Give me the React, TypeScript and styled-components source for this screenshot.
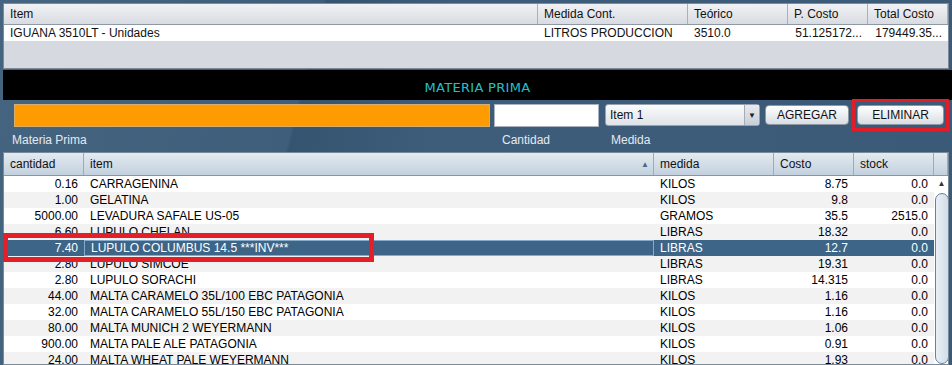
import styled, { createGlobalStyle } from 'styled-components'

const GlobalStyle = createGlobalStyle`
  body {
    margin: 0;
    background: #3b5a78;
    font-family: "Liberation Sans", Arial, sans-serif;
    font-size: 12px;
  }
`

const Frame = styled.div`
  position: relative;
  width: 952px;
  height: 365px;
  overflow: hidden;
  box-sizing: border-box;
  padding: 3px 3px 0 3px;
  display: flex;
  flex-direction: column;
  background: linear-gradient(104deg, #45647f 0, #3f5e7b 31%, #35546f 31.3%, #3d5d7b 45%, #3b5a78 100%);
`

const TopTable = styled.div`
  height: 66px;
  flex: none;
  box-sizing: border-box;
  border: 1px solid #7d8a99;
  background: #d6d9e0;
`

const TopRow = styled.div<{ $head?: boolean }>`
  display: grid;
  grid-template-columns: 534px 150px 100px 80px 1fr;
  height: ${p => (p.$head ? '20px' : '16px')};
  line-height: ${p => (p.$head ? '20px' : '16px')};
  background: ${p => (p.$head ? 'linear-gradient(#f1f2f5, #d8dbe1)' : '#fff')};
  border-bottom: ${p => (p.$head ? '1px solid #8e99a6' : 'none')};
`

const TopCell = styled.div<{ $head?: boolean; $right?: boolean }>`
  padding: 0 6px;
  color: #111;
  white-space: nowrap;
  overflow: hidden;
  text-align: ${p => (p.$right ? 'right' : 'left')};
  border-right: ${p => (p.$head ? '1px solid #aab1bb' : 'none')};
`

const TitleBar = styled.div`
  height: 30px;
  flex: none;
  margin-top: 1px;
  margin-right: -3px;
  background: #000;
  display: flex;
  align-items: center;
  justify-content: center;
  padding-top: 5px;
  box-sizing: border-box;
  color: #23c0c9;
  font-family: "DejaVu Sans", sans-serif;
  font-size: 13px;
  letter-spacing: 0.3px;
`

const Controls = styled.div`
  height: 30px;
  flex: none;
  display: flex;
  align-items: center;
  padding-left: 11px;
`

const Field = styled.div<{ $w: number; $bg: string }>`
  width: ${p => p.$w}px;
  height: 23px;
  box-sizing: border-box;
  background: ${p => p.$bg};
  border: 1px solid ${p => (p.$bg === '#fff' ? '#a9b4c0' : '#d9ad6a')};
  margin-right: 4px;
`

const Combo = styled.div`
  width: 155px;
  height: 22px;
  box-sizing: border-box;
  margin-left: 2px;
  border: 1px solid #98a3af;
  border-radius: 3px;
  background: linear-gradient(#fafbfc, #dfe2e7);
  display: flex;
  align-items: center;
  justify-content: space-between;
  padding-left: 4px;
  color: #111;
`

const ComboArrow = styled.div`
  width: 15px;
  height: 100%;
  box-sizing: border-box;
  border-left: 1px solid #a3adb8;
  background: linear-gradient(#e8ebef, #c9ced6);
  display: flex;
  align-items: center;
  justify-content: center;
  font-size: 8px;
  color: #222;
`

const Button = styled.div<{ $w: number }>`
  width: ${p => p.$w}px;
  height: 20px;
  box-sizing: border-box;
  border: 1px solid #8d97a3;
  border-radius: 4px;
  background: linear-gradient(#ffffff, #d9dde3);
  display: flex;
  align-items: center;
  justify-content: center;
  color: #111;
`

const AddButton = styled(Button)`
  margin-left: 5px;
`

const RedFrame = styled.div`
  margin-left: 3px;
  margin-top: -1px;
  padding: 3px 2px;
  border: 3px solid #e11d27;
`

const Labels = styled.div`
  height: 20px;
  flex: none;
  margin-bottom: 2px;
  display: grid;
  grid-template-columns: 490px 109px 1fr;
  padding-left: 9px;
  align-items: center;
  color: #e4eaf1;
`

const Grid = styled.div`
  flex: 1;
  min-height: 0;
  border: 1px solid #7b8a99;
  background: #fff;
  display: flex;
  flex-direction: column;
  overflow: hidden;
`

const cols = '80px 570px 120px 80px 80px'

const GridHead = styled.div`
  display: grid;
  grid-template-columns: ${cols} 1fr;
  height: 22px;
  flex: none;
  border-bottom: 1px solid #8697a8;
  background: linear-gradient(#e4eaf0, #c3d1de);
`

const HeadCell = styled.div`
  display: flex;
  align-items: center;
  justify-content: space-between;
  padding: 0 4px 0 6px;
  border-right: 1px solid #9aabbb;
  color: #111;
`

const SortMark = styled.span`
  font-size: 8px;
  color: #44698f;
`

const Body = styled.div`
  flex: 1;
  display: flex;
  min-height: 0;
`

const Rows = styled.div`
  flex: 1;
`

const Row = styled.div<{ $alt: boolean; $sel: boolean }>`
  display: grid;
  grid-template-columns: ${cols};
  height: 16px;
  line-height: 16px;
  background: ${p => (p.$sel ? '#3d6588' : p.$alt ? '#f2f2f2' : '#fff')};
  color: ${p => (p.$sel ? '#fff' : '#000')};
`

const Cell = styled.div<{ $right?: boolean; $focus?: boolean }>`
  white-space: nowrap;
  overflow: hidden;
  box-sizing: border-box;
  text-align: ${p => (p.$right ? 'right' : 'left')};
  padding: ${p => (p.$right ? '0 6px 0 0' : '0 0 0 6px')};
  border: ${p => (p.$focus ? '1px solid #86aacb' : 'none')};
  line-height: ${p => (p.$focus ? '14px' : '16px')};
`

const Scrollbar = styled.div`
  width: 15px;
  flex: none;
  background: #fff;
  display: flex;
  flex-direction: column;
  align-items: center;
`

const ScrollArrow = styled.div`
  height: 15px;
  display: flex;
  align-items: center;
  justify-content: center;
  font-size: 8px;
  color: #333;
`

const Thumb = styled.div`
  width: 14px;
  flex: 1;
  margin-top: 2px;
  box-sizing: border-box;
  border: 1px solid #5f82a5;
  border-radius: 8px;
  background: linear-gradient(90deg, #e9eff5, #d2dde8);
`

const Marker = styled.div`
  position: absolute;
  left: 3px;
  top: 233px;
  width: 371px;
  height: 29px;
  box-sizing: border-box;
  border: 5px solid #e3202a;
`

const rows = [
  ['0.16', 'CARRAGENINA', 'KILOS', '8.75', '0.0'],
  ['1.00', 'GELATINA', 'KILOS', '9.8', '0.0'],
  ['5000.00', 'LEVADURA SAFALE US-05', 'GRAMOS', '35.5', '2515.0'],
  ['6.60', 'LUPULO CHELAN', 'LIBRAS', '18.32', '0.0'],
  ['7.40', 'LUPULO COLUMBUS 14.5 ***INV***', 'LIBRAS', '12.7', '0.0'],
  ['2.80', 'LUPULO SIMCOE', 'LIBRAS', '19.31', '0.0'],
  ['2.80', 'LUPULO SORACHI', 'LIBRAS', '14.315', '0.0'],
  ['44.00', 'MALTA CARAMELO 35L/100 EBC PATAGONIA', 'KILOS', '1.16', '0.0'],
  ['32.00', 'MALTA CARAMELO 55L/150 EBC PATAGONIA', 'KILOS', '1.16', '0.0'],
  ['80.00', 'MALTA MUNICH 2 WEYERMANN', 'KILOS', '1.06', '0.0'],
  ['900.00', 'MALTA PALE ALE PATAGONIA', 'KILOS', '0.91', '0.0'],
  ['24.00', 'MALTA WHEAT PALE WEYERMANN', 'KILOS', '1.93', '0.0'],
]

const selected = 4

export default function App() {
  return (
    <>
      <GlobalStyle />
      <Frame>
        <TopTable>
          <TopRow $head>
            <TopCell $head>Item</TopCell>
            <TopCell $head>Medida Cont.</TopCell>
            <TopCell $head>Teórico</TopCell>
            <TopCell $head>P. Costo</TopCell>
            <TopCell $head>Total Costo</TopCell>
          </TopRow>
          <TopRow>
            <TopCell>IGUANA 3510LT - Unidades</TopCell>
            <TopCell>LITROS PRODUCCION</TopCell>
            <TopCell>3510.0</TopCell>
            <TopCell $right>51.125172...</TopCell>
            <TopCell $right>179449.35...</TopCell>
          </TopRow>
        </TopTable>

        <TitleBar>MATERIA PRIMA</TitleBar>

        <Controls>
          <Field $w={476} $bg="#fe9b00" />
          <Field $w={105} $bg="#fff" />
          <Combo>
            Item 1
            <ComboArrow>▼</ComboArrow>
          </Combo>
          <AddButton $w={84}>AGREGAR</AddButton>
          <RedFrame>
            <Button $w={87}>ELIMINAR</Button>
          </RedFrame>
        </Controls>

        <Labels>
          <span>Materia Prima</span>
          <span>Cantidad</span>
          <span>Medida</span>
        </Labels>

        <Grid>
          <GridHead>
            <HeadCell>cantidad</HeadCell>
            <HeadCell>
              item<SortMark>▲</SortMark>
            </HeadCell>
            <HeadCell>medida</HeadCell>
            <HeadCell>Costo</HeadCell>
            <HeadCell>stock</HeadCell>
            <HeadCell />
          </GridHead>
          <Body>
            <Rows>
              {rows.map((r, i) => (
                <Row key={i} $alt={i % 2 === 1} $sel={i === selected}>
                  <Cell $right>{r[0]}</Cell>
                  <Cell $focus={i === selected}>{r[1]}</Cell>
                  <Cell>{r[2]}</Cell>
                  <Cell $right>{r[3]}</Cell>
                  <Cell $right>{r[4]}</Cell>
                </Row>
              ))}
            </Rows>
            <Scrollbar>
              <ScrollArrow>▲</ScrollArrow>
              <Thumb />
            </Scrollbar>
          </Body>
        </Grid>

        <Marker />
      </Frame>
    </>
  )
}
